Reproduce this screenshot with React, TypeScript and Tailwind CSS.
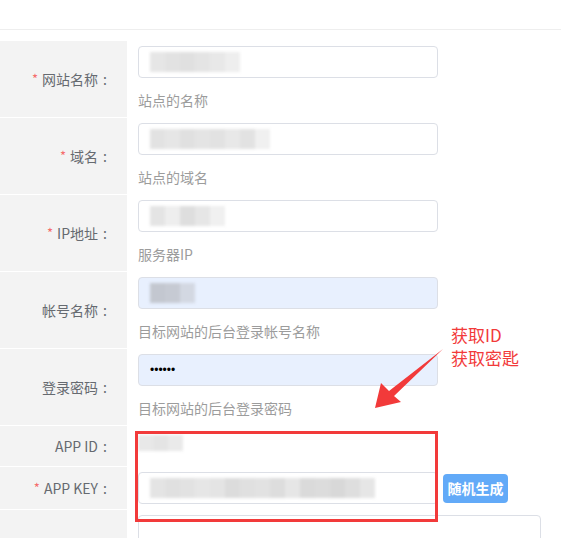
import React from "react";

const font = { fontFamily: '"Noto Sans CJK SC", "Noto Sans", sans-serif' };

function Smudge({ shades, h = "h-5", className = "" }: { shades: string[]; h?: string; className?: string }) {
  return (
    <div className={`flex blur-[1.5px] ${className}`}>
      {shades.map((c, i) => (
        <div key={i} className={`${h} w-[15px]`} style={{ background: c }} />
      ))}
    </div>
  );
}

function Label({ text, required }: { text: string; required?: boolean }) {
  return (
    <div className="w-[127px] shrink-0 bg-[#f3f3f3] flex items-center justify-end pr-[15px] text-[14px] text-[#666a70]">
      {required && <span className="text-[#f56c6c] mr-[4px] text-[13px]">*</span>}
      {text}
      <span className="w-[14px] text-center">:</span>
    </div>
  );
}

function Field({
  label,
  required,
  help,
  autofill,
  children,
}: {
  label: string;
  required?: boolean;
  help: string;
  autofill?: boolean;
  children: React.ReactNode;
}) {
  return (
    <div className="flex h-[77px] border-b border-white">
      <Label text={label} required={required} />
      <div className="pl-[11px] pt-[5px]">
        <div
          className={`w-[300px] h-8 rounded border flex items-center px-[11px] ${
            autofill ? "bg-[#e8f0fe] border-[#dcdfe6]" : "bg-white border-[#dcdfe6]"
          }`}
        >
          {children}
        </div>
        <div className="mt-[12px] text-[14px] leading-5 text-[#9c9c9c]">{help}</div>
      </div>
    </div>
  );
}

export default function App() {
  return (
    <div className="relative w-[561px] h-[538px] overflow-hidden bg-white" style={font}>
      <div className="h-[30px] border-b border-[#eeeeee]" />
      <div className="pt-[11px]">
        <Field label="网站名称" required help="站点的名称">
          <Smudge shades={["#e6e6e6", "#e2e2e2", "#e0e0e0", "#e4e4e4", "#e8e8e8", "#eeeeee"]} />
        </Field>
        <Field label="域名" required help="站点的域名">
          <Smudge shades={["#e2e2e2", "#e6e6e6", "#e0e0e0", "#e4e4e4", "#e2e2e2", "#e8e8e8", "#e2e2e2", "#f0f0f0"]} />
        </Field>
        <Field label="IP地址" required help="服务器IP">
          <Smudge shades={["#e4e4e4", "#eeeeee", "#dedede", "#e6e6e6", "#f0f0f0"]} />
        </Field>
        <Field label="帐号名称" help="目标网站的后台登录帐号名称" autofill>
          <Smudge shades={["#c3c7d0", "#c6cad3", "#d3d8e2"]} />
        </Field>
        <Field label="登录密码" help="目标网站的后台登录密码" autofill>
          <span className="text-[12px] text-black" style={{ fontFamily: '"Liberation Sans", sans-serif' }}>
            ••••••
          </span>
        </Field>

        <div className="flex h-[41px] border-b border-white">
          <Label text="APP ID" />
          <div className="pl-[11px] pt-[9px]">
            <Smudge shades={["#e8e8e8", "#e4e4e4", "#eaeaea"]} h="h-4" />
          </div>
        </div>

        <div className="flex h-[43px] border-b border-white">
          <Label text="APP KEY" required />
          <div className="pl-[11px] flex items-center gap-[5px]">
            <div className="w-[300px] h-8 rounded border border-[#dcdfe6] bg-white flex items-center px-[11px]">
              <Smudge
                shades={[
                  "#e4e4e4", "#e0e0e0", "#e2e2e2", "#e6e6e6", "#e4e4e4", "#dcdcdc", "#e0e0e0", "#e2e2e2",
                  "#dddddd", "#e6e6e6", "#dadada", "#dcdcdc", "#d8d8d8", "#dedede", "#e6e6e6",
                ]}
              />
            </div>
            <button className="w-[65px] h-[29px] rounded bg-[#62aaf8] text-white text-[14px] font-bold">随机生成</button>
          </div>
        </div>

        <div className="flex h-[40px]">
          <div className="w-[127px] shrink-0 bg-[#f3f3f3]" />
          <div className="pl-[11px] pt-[5px]">
            <div className="w-[403px] h-[60px] rounded border border-[#dcdfe6] bg-white" />
          </div>
        </div>
      </div>

      <div className="absolute left-[135px] top-[431px] w-[303px] h-[91px] border-[3px] border-[#f23a3a]" />

      <svg className="absolute left-0 top-0 pointer-events-none" width="561" height="538">
        <polygon points="375,408 381,383 389,391 443,349 394,396 401,402" fill="#f23a3a" />
      </svg>

      <div className="absolute left-[451px] top-[323px] text-[17px] leading-[23px] text-[#f23a3a]">
        <div>获取ID</div>
        <div>获取密匙</div>
      </div>
    </div>
  );
}
